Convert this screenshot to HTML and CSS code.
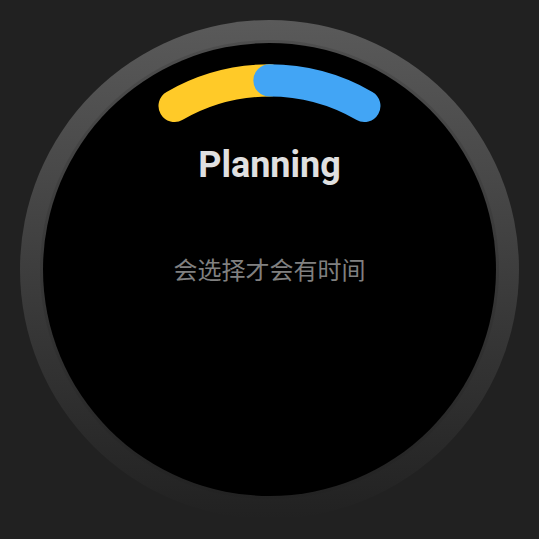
FILE: index.html
```html
<!DOCTYPE html>
<html lang="zh-CN">
<head>
<meta charset="utf-8">
<meta name="viewport" content="width=device-width, initial-scale=1">
<title>Planning</title>
<link rel="stylesheet" href="styles.css">
</head>
<body>
<main class="watch">
  <div class="bezel">
    <section class="dial">
      <header class="head">
        <svg class="progress" viewBox="0 0 220 58" aria-hidden="true">
          <path class="segment planned" d="M15.5 41.5A188 188 0 0 1 109.5 16.3"/>
          <path class="segment active" d="M109.5 16.3A188 188 0 0 1 203.5 41.5"/>
        </svg>
        <h1 class="title">Planning</h1>
      </header>
      <p class="message">会选择才会有时间</p>
    </section>
  </div>
</main>
</body>
</html>
```

FILE: styles.css
```css
* {
  box-sizing: border-box;
}

body {
  margin: 0;
  min-height: 100vh;
  background: #212121;
  font-family: Roboto, "Noto Sans CJK SC", sans-serif;
}

.watch {
  padding: 20px;
}

.bezel {
  aspect-ratio: 1;
  padding: 20px;
  border-radius: 50%;
  background: linear-gradient(#5a5a5a, #212121);
}

.dial {
  display: grid;
  grid-template-rows: 1fr auto 1fr;
  justify-items: center;
  height: 100%;
  border: 3px solid transparent;
  border-radius: 50%;
  background:
    linear-gradient(#000, #000) padding-box,
    linear-gradient(#4e4e4e, #222) border-box;
}

.head {
  display: flex;
  flex-direction: column;
  align-items: center;
  gap: 20px;
  width: 100%;
  padding-top: 21px;
}

.progress {
  display: block;
  width: 49%;
  overflow: visible;
}

.segment {
  fill: none;
  stroke-width: 32;
  stroke-linecap: round;
}

.planned {
  stroke: #ffca28;
}

.active {
  stroke: #42a5f5;
}

.title {
  margin: 0;
  color: #e0e0e0;
  font-size: 36px;
  font-weight: 700;
  line-height: 44px;
}

.message {
  margin: 0;
  padding-top: 2px;
  color: #808080;
  font-size: 24px;
  line-height: 36px;
}
```
